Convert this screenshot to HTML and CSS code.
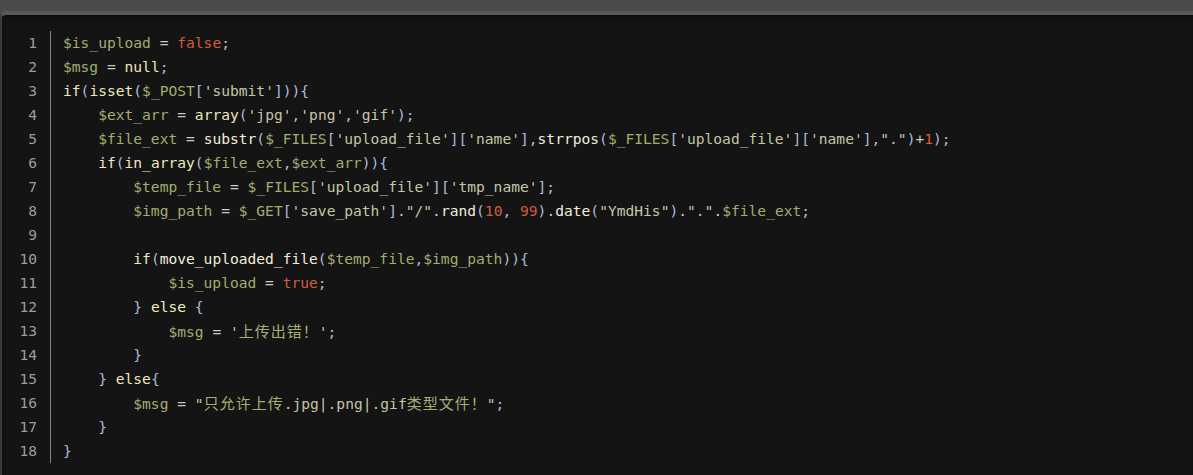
FILE: index.html
```html
<!DOCTYPE html>
<html lang="zh-CN">
<head>
<meta charset="utf-8">
<title>code</title>
<link rel="stylesheet" href="styles.css">
</head>
<body>
<div class="frame">
  <div class="code">
    <div class="gutter">
      <div class="num">1</div><div class="num">2</div><div class="num">3</div><div class="num">4</div><div class="num">5</div><div class="num">6</div><div class="num">7</div><div class="num">8</div><div class="num">9</div><div class="num">10</div><div class="num">11</div><div class="num">12</div><div class="num">13</div><div class="num">14</div><div class="num">15</div><div class="num">16</div><div class="num">17</div><div class="num">18</div>
    </div>
    <div class="lines">
<div class="ln"><span class="v">$is_upload</span> <span class="o">=</span> <span class="b">false</span><span class="p">;</span></div>
<div class="ln"><span class="v">$msg</span> <span class="o">=</span> <span class="k">null</span><span class="p">;</span></div>
<div class="ln"><span class="k">if</span><span class="p">(</span><span class="k">isset</span><span class="p">(</span><span class="v">$_POST</span><span class="p">[</span><span class="s">'submit'</span><span class="p">])){</span></div>
<div class="ln">    <span class="v">$ext_arr</span> <span class="o">=</span> <span class="k">array</span><span class="p">(</span><span class="s">'jpg'</span><span class="p">,</span><span class="s">'png'</span><span class="p">,</span><span class="s">'gif'</span><span class="p">);</span></div>
<div class="ln">    <span class="v">$file_ext</span> <span class="o">=</span> <span class="f">substr</span><span class="p">(</span><span class="v">$_FILES</span><span class="p">[</span><span class="s">'upload_file'</span><span class="p">][</span><span class="s">'name'</span><span class="p">],</span><span class="f">strrpos</span><span class="p">(</span><span class="v">$_FILES</span><span class="p">[</span><span class="s">'upload_file'</span><span class="p">][</span><span class="s">'name'</span><span class="p">],</span><span class="s">"."</span><span class="p">)</span><span class="o">+</span><span class="b">1</span><span class="p">);</span></div>
<div class="ln">    <span class="k">if</span><span class="p">(</span><span class="k">in_array</span><span class="p">(</span><span class="v">$file_ext</span><span class="p">,</span><span class="v">$ext_arr</span><span class="p">)){</span></div>
<div class="ln">        <span class="v">$temp_file</span> <span class="o">=</span> <span class="v">$_FILES</span><span class="p">[</span><span class="s">'upload_file'</span><span class="p">][</span><span class="s">'tmp_name'</span><span class="p">];</span></div>
<div class="ln">        <span class="v">$img_path</span> <span class="o">=</span> <span class="v">$_GET</span><span class="p">[</span><span class="s">'save_path'</span><span class="p">]</span><span class="o">.</span><span class="s">"/"</span><span class="o">.</span><span class="f">rand</span><span class="p">(</span><span class="b">10</span><span class="p">,</span> <span class="b">99</span><span class="p">)</span><span class="o">.</span><span class="f">date</span><span class="p">(</span><span class="s">"YmdHis"</span><span class="p">)</span><span class="o">.</span><span class="s">"."</span><span class="o">.</span><span class="v">$file_ext</span><span class="p">;</span></div>
<div class="ln"> </div>
<div class="ln">        <span class="k">if</span><span class="p">(</span><span class="f">move_uploaded_file</span><span class="p">(</span><span class="v">$temp_file</span><span class="p">,</span><span class="v">$img_path</span><span class="p">)){</span></div>
<div class="ln">            <span class="v">$is_upload</span> <span class="o">=</span> <span class="b">true</span><span class="p">;</span></div>
<div class="ln">        <span class="p">}</span> <span class="k">else</span> <span class="p">{</span></div>
<div class="ln">            <span class="v">$msg</span> <span class="o">=</span> <span class="s">'<span class="cjk">上传出错！</span>'</span><span class="p">;</span></div>
<div class="ln">        <span class="p">}</span></div>
<div class="ln">    <span class="p">}</span> <span class="k">else</span><span class="p">{</span></div>
<div class="ln">        <span class="v">$msg</span> <span class="o">=</span> <span class="s">"<span class="cjk">只允许上传</span>.jpg|.png|.gif<span class="cjk">类型文件！</span>"</span><span class="p">;</span></div>
<div class="ln">    <span class="p">}</span></div>
<div class="ln"><span class="p">}</span></div>
    </div>
  </div>
</div>
</body>
</html>
```

FILE: styles.css
```css
html, body {
  margin: 0;
  padding: 0;
}
body {
  background: #4a4a4a;
  height: 475px;
  overflow: hidden;
  padding-top: 11px;
  box-sizing: border-box;
}
.frame {
  border-top: 4px solid #5a5a5a;
  border-left: 2px solid #3c3c3c;
  border-top-left-radius: 7px;
  background: #141414;
  height: 464px;
  box-sizing: border-box;
  overflow: hidden;
}
.code {
  display: flex;
  padding-top: 16px;
  background: #141414;
  border-top-left-radius: 4px;
  box-shadow: inset 0 5px 6px -3px rgba(0,0,0,0.55);
  height: 100%;
  box-sizing: border-box;
  font-family: "DejaVu Sans Mono", "Liberation Mono", monospace;
  font-size: 14.6px;
}
.gutter {
  align-self: flex-start;
  width: 35px;
  padding-right: 13px;
  border-right: 1px solid #858585;
  text-align: right;
  color: #9c9c9c;
}
.num, .ln {
  height: 24px;
  line-height: 24px;
}
.lines {
  padding-left: 12px;
  color: #d0d0d0;
}
.ln {
  white-space: pre;
}
.v { color: #a0ae6e; }
.k { color: #eeeabc; }
.f { color: #f1efdc; }
.b { color: #d35b3d; }
.p { color: #a9bedb; }
.o { color: #c9c9c9; }
.s { color: #c3c7a6; }
.cjk {
  font-family: "Noto Sans CJK SC", sans-serif;
  font-size: 15px;
  letter-spacing: 1px;
  color: #a6ae74;
}
```
